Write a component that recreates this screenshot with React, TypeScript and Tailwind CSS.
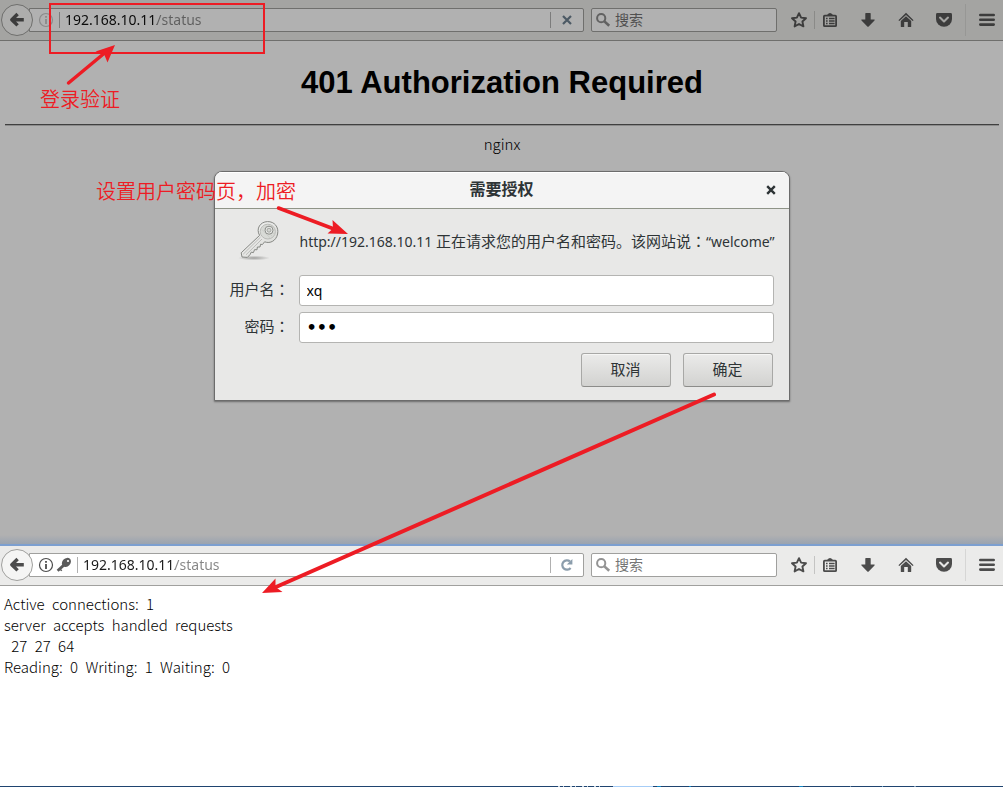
import React, { useState } from 'react';
import clsx from 'clsx';

const CJK = "font-['Noto_Sans_CJK_SC',sans-serif]";
const UI = "font-['Noto_Sans','Noto_Sans_CJK_SC',sans-serif]";

const STATUS_LINES = [
  'Active connections: 1',
  'server accepts handled requests',
  ' 27 27 64',
  'Reading: 0 Writing: 1 Waiting: 0',
];

const BackIcon = () => (
  <svg viewBox="0 0 16 16" className="size-4" fill="none" stroke="currentColor" strokeWidth="3.4" strokeLinejoin="round">
    <path d="M8.6 2 L2.8 7.7 L8.6 13.4 M3.2 7.7 H14.8" />
  </svg>
);

const InfoIcon = () => (
  <svg viewBox="0 0 16 16" className="size-4 shrink-0" fill="none" stroke="currentColor">
    <circle cx="8" cy="8" r="6.5" strokeWidth="1.2" />
    <path d="M8 7 V12" strokeWidth="1.8" />
    <path d="M8 4 V5.8" strokeWidth="1.8" />
  </svg>
);

const SmallKeyIcon = () => (
  <svg viewBox="0 0 16 16" className="size-4 shrink-0" fill="none" stroke="#5b5b5b">
    <path d="M7.6 8.4 L1.6 13.8" strokeWidth="2.8" />
    <path d="M4.4 12.4 L5.8 13.8" strokeWidth="1.4" />
    <ellipse cx="10.4" cy="5.4" rx="5" ry="4" transform="rotate(-45 10.4 5.4)" fill="#5b5b5b" stroke="none" />
    <circle cx="12" cy="4" r="1.1" fill="#fff" stroke="none" />
  </svg>
);

const StopIcon = () => (
  <svg viewBox="0 0 16 16" className="size-4" stroke="#4c5964" strokeWidth="2.2">
    <path d="M4 4 L12 12 M12 4 L4 12" />
  </svg>
);

const ReloadIcon = () => (
  <svg viewBox="0 0 16 16" className="size-4" fill="none" stroke="#8b9dac" strokeWidth="2.2">
    <path d="M11.6 11 A4.7 4.7 0 1 1 11 4.4" />
    <path d="M13.4 2 V7.6 H7.8 Z" fill="#8b9dac" stroke="none" />
  </svg>
);

const SearchIcon = () => (
  <svg viewBox="0 0 16 16" className="size-4 shrink-0" fill="none" stroke="currentColor">
    <circle cx="6.2" cy="6.2" r="4.1" strokeWidth="2" />
    <path d="M9.4 9.4 L14.2 13.8" strokeWidth="2.6" />
  </svg>
);

const StarIcon = () => (
  <svg viewBox="0 0 18 18" className="size-[18px]" fill="none" stroke="currentColor" strokeWidth="1.9" strokeLinejoin="round">
    <path d="M9 2.2 L11.1 6.6 L16 7.2 L12.4 10.5 L13.4 15.4 L9 13 L4.6 15.4 L5.6 10.5 L2 7.2 L6.9 6.6 Z" />
  </svg>
);

const ListIcon = () => (
  <svg viewBox="0 0 16 16" className="size-4" fill="none" stroke="currentColor">
    <path d="M1.9 4.4 Q1.9 3.6 2.7 3.6 H13.3 Q14.1 3.6 14.1 4.4 V13.4 Q14.1 14.2 13.3 14.2 H2.7 Q1.9 14.2 1.9 13.4 Z" strokeWidth="1.8" />
    <path d="M4.5 3.6 L6.6 1.6 Q8 0.2 9.4 1.6 L11.5 3.6 Z" fill="currentColor" stroke="none" />
    <path d="M4 6.5 H5.6 M7 6.5 H12.6 M4 9 H5.6 M7 9 H12.6 M4 11.5 H5.6 M7 11.5 H12.6" strokeWidth="1.3" />
  </svg>
);

const DownloadIcon = () => (
  <svg viewBox="0 0 16 16" className="size-4" fill="currentColor">
    <path d="M5.3 1.6 Q5.3 1 5.9 1 H10.1 Q10.7 1 10.7 1.6 V7.6 H14.2 Q15.2 7.6 14.5 8.4 L8.7 14.5 Q8 15.2 7.3 14.5 L1.5 8.4 Q0.8 7.6 1.8 7.6 H5.3 Z" />
  </svg>
);

const HomeIcon = () => (
  <svg viewBox="0 0 16 16" className="size-4" fill="currentColor">
    <path d="M8 0.8 L15.6 8.2 L14.6 9.1 L8 2.9 L1.4 9.1 L0.4 8.2 Z" />
    <path d="M8 4.2 L13.2 9.1 V14.4 Q13.2 15 12.6 15 H9.8 V10 H6.2 V15 H3.4 Q2.8 15 2.8 14.4 V9.1 Z" />
  </svg>
);

const PocketIcon = () => (
  <svg viewBox="0 0 16 16" className="size-4" fill="currentColor">
    <path d="M1.4 1 H14.6 Q16 1 16 2.4 V7 A8 7.8 0 0 1 0 7 V2.4 Q0 1 1.4 1 Z" />
    <path d="M4 5.6 L8 9.4 L12 5.6" fill="none" strokeWidth="2.1" strokeLinecap="round" strokeLinejoin="round" className="stroke-[#e6e6e5] group-data-dim:stroke-[#a3a3a1]" />
  </svg>
);

const MenuIcon = () => (
  <svg viewBox="0 0 16 16" className="size-4" stroke="currentColor" strokeWidth="2.6" strokeLinecap="round">
    <path d="M1.3 3 H14.7 M1.3 7.8 H14.7 M1.3 12.6 H14.7" />
  </svg>
);

const DialogKeyIcon = () => (
  <svg viewBox="0 0 44 42" className="w-11 h-[42px]" fill="none">
    <defs>
      <linearGradient id="metal" x1="0" y1="0" x2="1" y2="1">
        <stop offset="0" stopColor="#fafafa" />
        <stop offset="1" stopColor="#d2d3cf" />
      </linearGradient>
      <radialGradient id="shade">
        <stop offset="0" stopColor="#6d6d6b" stopOpacity="0.6" />
        <stop offset="1" stopColor="#6d6d6b" stopOpacity="0" />
      </radialGradient>
    </defs>
    <ellipse cx="16" cy="38" rx="16" ry="2.4" fill="url(#shade)" />
    <path
      d="M21.6 15.4 C17.6 8.6 22.4 1.8 29.4 1.6 C36.6 1.4 41 7.2 39.6 14 C38.2 20.6 32.4 24 26.6 21.8 L24.4 24.6 L22.6 24.2 L22 27 L19.4 27 L19 29.8 L16.6 29.6 L15.4 32.6 L13.2 32.2 L12.2 34.4 L9.4 37.4 L4 37 L3.2 32.8 Z"
      fill="url(#metal)"
      stroke="#858783"
      strokeWidth="1"
      strokeLinejoin="round"
    />
    <path d="M22.6 17 L5.2 34.2 M24 19 L8 34.8" stroke="#b4b6b2" strokeWidth="0.9" />
    <ellipse cx="29.8" cy="11.6" rx="7.6" ry="7.4" fill="#d8dad6" stroke="#b4b6b2" strokeWidth="0.9" />
    <path d="M24 9.5 L32 17.8 M25.5 7.5 L34 16 M27.5 6 L36 14.2" stroke="#c4c6c2" strokeWidth="0.7" />
    <circle cx="31" cy="10.2" r="4" fill="#ecedeb" stroke="#8a8c88" />
    <circle cx="31" cy="10.2" r="2" fill="#d3d5d1" stroke="#9b9d99" strokeWidth="0.9" />
  </svg>
);

interface IconButtonProps {
  label: string;
  className?: string;
  children: React.ReactNode;
}

const IconButton: React.FC<IconButtonProps> = ({ label, className, children }) => (
  <button type="button" aria-label={label} className={clsx('flex w-6 h-7 shrink-0 items-center justify-center', className)}>
    {children}
  </button>
);

const Toolbar: React.FC<{ dim?: boolean }> = ({ dim }) => {
  const [url, setUrl] = useState('192.168.10.11/status');
  const line = dim ? 'border-[#6f6f6d]' : 'border-[#a0a09e]';
  const field = dim ? 'bg-[#b1b1b1]' : 'bg-white';

  return (
    <header
      data-dim={dim || undefined}
      className={clsx(
        'group flex h-[41px] shrink-0 items-center border-b',
        UI,
        line,
        dim ? 'bg-[#a4a4a2] text-[#3c3c3c]' : 'bg-[#ebebea] text-[#4c4c4c] shadow-[inset_0_1px_#7c9fd0]'
      )}
    >
      <button
        type="button"
        aria-label="后退"
        className={clsx('z-10 ml-px flex size-8 shrink-0 items-center justify-center rounded-full border', line, dim ? 'bg-[#adadac]' : 'bg-[#f5f5f4]')}
      >
        <BackIcon />
      </button>

      <div className={clsx('-ml-1 flex h-6 min-w-0 flex-1 items-center rounded-r-xs border pl-2', line, field)}>
        <span className={dim ? 'text-[#8a8a8a]' : 'text-[#4c4c4c]'}>
          <InfoIcon />
        </span>
        {!dim && (
          <span className="ml-0.5">
            <SmallKeyIcon />
          </span>
        )}
        <span className={clsx('ml-[5px] h-4 w-px', dim ? 'bg-[#7c7c7c]' : 'bg-[#b0b0b0]')} />
        <input
          type="text"
          aria-label="地址"
          value={url}
          onChange={(e) => setUrl(e.target.value)}
          className={clsx(
            'ml-[5px] h-5 min-w-0 flex-1 bg-clip-text text-sm text-transparent outline-none',
            dim
              ? 'bg-[linear-gradient(90deg,#0a0a0a_92px,#5f5f5f_92px)]'
              : 'bg-[linear-gradient(90deg,#1a1a1a_92px,#858585_92px)]'
          )}
        />
        <span className={clsx('h-4 w-px', dim ? 'bg-[#7c7c7c]' : 'bg-[#b0b0b0]')} />
        <button type="button" aria-label={dim ? '停止' : '重新载入'} className="flex h-5 w-8 items-center justify-center">
          {dim ? <StopIcon /> : <ReloadIcon />}
        </button>
      </div>

      <label className={clsx('ml-[7px] flex h-6 w-[186px] shrink-0 items-center rounded-xs border pl-[3px]', line, field, dim ? 'text-[#626262]' : 'text-[#939393]')}>
        <SearchIcon />
        <input
          type="text"
          aria-label="搜索"
          placeholder="搜索"
          className={clsx(
            'ml-1 h-5 min-w-0 flex-1 pb-0.5 text-sm outline-none',
            CJK,
            dim ? 'placeholder:text-[#505050]' : 'placeholder:text-[#757575]'
          )}
        />
      </label>

      <IconButton label="收藏" className="ml-2.5">
        <StarIcon />
      </IconButton>
      <span className={clsx('ml-[3px] h-[18px] w-px', dim ? 'bg-[#8a8a88]' : 'bg-[#c4c4c3]')} />
      <IconButton label="书签" className="ml-[3px]">
        <ListIcon />
      </IconButton>
      <IconButton label="下载" className="ml-3.5">
        <DownloadIcon />
      </IconButton>
      <IconButton label="主页" className="ml-3.5">
        <HomeIcon />
      </IconButton>
      <IconButton label="Pocket" className="ml-3.5">
        <PocketIcon />
      </IconButton>
      <span className={clsx('ml-[9px] h-8 w-px', dim ? 'bg-[#979795]' : 'bg-[#d6d6d5]')} />
      <IconButton label="菜单" className="ml-[9px] mr-1">
        <MenuIcon />
      </IconButton>
    </header>
  );
};

// The JP face centres the full-width colon in its square
const Colon = () => <span className="font-['Noto_Sans_CJK_JP',sans-serif]">：</span>;

const AuthDialog: React.FC = () => {
  const [user, setUser] = useState('xq');
  const [password, setPassword] = useState('123');
  const label = clsx('w-[60px] pb-[3px] text-right text-[15px] whitespace-nowrap text-[#2e3436]', CJK);
  const input = 'h-[31px] min-w-0 flex-1 rounded-[3px] border border-[#b4b4b2] bg-white px-[7px] text-black outline-none';
  const button = clsx(
    'h-[34px] w-[90px] rounded-[3px] border border-[#a8a8a6] border-b-[#8c8c8a] bg-linear-to-b from-[#ebebea] to-[#d2d2d0] pb-0.5 text-[15px] text-[#2e3436] shadow-[inset_0_1px_#f6f6f5]',
    CJK
  );

  return (
    <div className="absolute inset-x-0 top-[171px] flex justify-center">
      <form
        role="dialog"
        aria-labelledby="auth-title"
        onSubmit={(e) => e.preventDefault()}
        className={clsx('w-[576px] overflow-hidden rounded-t-lg border border-[#6c6c6c] bg-[#e8e8e7] shadow-[0_1px_2px_#00000066]', UI)}
      >
        <div className="flex h-[37px] items-center border-b border-[#8f9488] bg-[#f4f4f4] pl-9 shadow-[inset_0_1px_white]">
          <h2 id="auth-title" className={clsx('flex-1 pb-1 text-center text-base leading-6 font-bold text-[#2e3436]', CJK)}>
            需要授权
          </h2>
          <button type="button" aria-label="关闭" className="flex h-8 w-9 items-center justify-center">
            <svg viewBox="0 0 10 10" className="size-2.5" stroke="#2e3436" strokeWidth="2.4">
              <path d="M1.2 1.2 L8.8 8.8 M8.8 1.2 L1.2 8.8" />
            </svg>
          </button>
        </div>

        <div className="flex flex-col gap-1.5 px-[15px] pt-2 pb-[13px]">
          <div className="mb-1 flex h-12 items-center">
            <div className="flex w-[70px] shrink-0 justify-end pr-[18px]">
              <span className="shrink-0">
                <DialogKeyIcon />
              </span>
            </div>
            <p className="min-w-0 flex-1 text-sm whitespace-nowrap text-[#2e3436]">
              http://192.168.10.11{' '}
              <span className={clsx('text-[15px]', CJK)}>
                正在请求您的用户名和密码。该网站说
                <Colon />
              </span>
              “welcome”
            </p>
          </div>

          <div className="flex items-center gap-[9px]">
            <label htmlFor="user" className={label}>
              用户名
              <Colon />
            </label>
            <input id="user" type="text" value={user} onChange={(e) => setUser(e.target.value)} className={clsx(input, 'text-sm')} />
          </div>
          <div className="flex items-center gap-[9px]">
            <label htmlFor="password" className={label}>
              密码
              <Colon />
            </label>
            <input
              id="password"
              type="password"
              value={password}
              onChange={(e) => setPassword(e.target.value)}
              className={clsx(input, "font-['DejaVu_Sans',sans-serif] text-base font-bold")}
            />
          </div>

          <div className="mt-1 mr-px flex justify-end gap-3">
            <button type="button" className={button}>
              取消
            </button>
            <button type="submit" className={button}>
              确定
            </button>
          </div>
        </div>
      </form>
    </div>
  );
};

// Red pen marks laid over both browser windows
const Annotations: React.FC = () => (
  <div className={clsx('pointer-events-none absolute inset-0 overflow-hidden text-xl leading-6 font-[350] text-[#ed1c24]', CJK)}>
    <div className="absolute top-[3px] left-[49px] h-[51px] w-[216px] border-2 border-[#ed1c24]" />
    <span className="absolute top-[87px] left-10">登录验证</span>
    <span className="absolute top-[179px] left-24">设置用户密码页，加密</span>
    <svg width="1003" height="787" className="absolute top-0 left-0" fill="#ed1c24" stroke="#ed1c24" strokeLinecap="round">
      <path d="M68.5 83 L104 53.5" strokeWidth="3.5" />
      <path d="M115 45 L107.5 62.5 L104 54 L95.5 51.5 Z" stroke="none" />
      <path d="M278.5 208 L334 229" strokeWidth="3.5" />
      <path d="M348 234 L327.5 233.5 L333 228.5 L332.5 220 Z" stroke="none" />
      <path d="M714 394.5 L276 587" strokeWidth="4" />
      <path d="M262 593 L275.5 578.5 L275.5 587 L282.5 592 Z" stroke="none" />
    </svg>
  </div>
);

const App: React.FC = () => {
  return (
    <div className="relative flex min-h-screen flex-col bg-white">
      <section className="relative h-[545px] shrink-0 bg-[#b1b1b1]">
        <Toolbar dim />
        <main className="pr-1 pl-[5px] text-center text-black">
          <h1 className="pt-[22px] pb-[21px] font-['Liberation_Sans',sans-serif] text-[31px] leading-10 font-bold">401 Authorization Required</h1>
          <hr className="border-t border-b border-t-[#404040] border-b-[#8c8c8c]" />
          <p className={clsx('pt-[7px] text-[15px] leading-[22px] font-light', CJK)}>nginx</p>
        </main>
        <div className="absolute inset-x-0 bottom-0 h-2.5 border-b border-[#7c9fd0] bg-linear-to-b from-[#b1b1b1] to-[#9aa3b0]" />
        <AuthDialog />
      </section>

      <Toolbar />
      <pre className={clsx('flex-1 px-1 pt-[7px] text-[15px] leading-[21px] font-light text-black', CJK)}>
        {STATUS_LINES.map((line) => (
          <React.Fragment key={line}>
            {line.split(' ').map((word, idx) => (
              <React.Fragment key={idx}>
                {idx > 0 && ' '}
                <span className="mr-1">{word}</span>
              </React.Fragment>
            ))}
            {'\n'}
          </React.Fragment>
        ))}
      </pre>
      <svg className="h-px w-full bg-[#1f4470]" height="1">
        <path d="M558 0.5 h44" stroke="#c9d6e2" strokeDasharray="2 3 1 6" />
        <rect x="613" width="40" height="1" fill="#a6cdf7" />
        <rect x="657" width="4" height="1" fill="#0f86c4" />
        <rect x="689" width="2" height="1" fill="#0f86c4" />
        <rect x="799" width="4" height="1" fill="#0f86c4" />
        <rect x="850" width="1" height="1" fill="#7f9bb5" />
        <rect x="882" width="1" height="1" fill="#6fa8cc" />
        <rect x="914" width="2" height="1" fill="#7f9bb5" />
      </svg>
      <Annotations />
    </div>
  );
};

export default App;
